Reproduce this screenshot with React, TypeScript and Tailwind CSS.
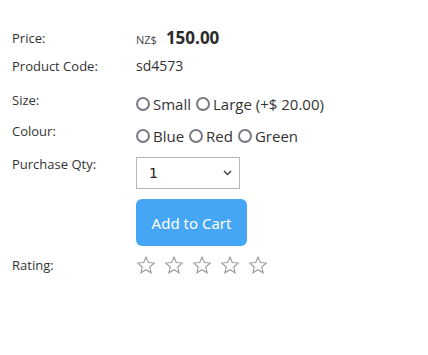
import React from 'react';

const Radio = ({ label }: { label: string }) => (
  <label className="inline-flex items-center mr-[5px]">
    <span className="w-[14px] h-[14px] rounded-full border-2 border-[#7a7a85] bg-white mr-[3px]" />
    <span>{label}</span>
  </label>
);

const Star = () => (
  <svg width="20" height="20" viewBox="0 0 24 24" className="mr-[8px]">
    <path
      d="M12 2.5l2.8 6.6 7.1.6-5.4 4.7 1.6 7-6.1-3.7-6.1 3.7 1.6-7-5.4-4.7 7.1-.6z"
      fill="none"
      stroke="#9a9a9a"
      strokeWidth="1.3"
    />
  </svg>
);

export default function App() {
  return (
    <div className="w-[428px] h-[355px] bg-white pl-[12px] pt-[28px] text-[#333] font-['Open_Sans',sans-serif] text-[13px] leading-[20px]">
      {/* Price */}
      <div className="flex h-[20px]">
        <div className="w-[124px]">Price:</div>
        <div className="flex items-baseline">
          <span className="text-[11px] text-[#444] mr-[9px]">NZ$</span>
          <span className="text-[17px] font-bold text-[#2b2b2b]">150.00</span>
        </div>
      </div>

      {/* Code */}
      <div className="flex mt-[8px] h-[20px]">
        <div className="w-[124px]">Product Code:</div>
        <div className="text-[14px]">sd4573</div>
      </div>

      {/* Size */}
      <div className="flex mt-[14px]">
        <div className="w-[124px]">Size:</div>
        <div className="flex items-center mt-[4px] text-[15px] h-[20px]">
          <Radio label="Small" />
          <Radio label="Large (+$ 20.00)" />
        </div>
      </div>

      {/* Colour */}
      <div className="flex mt-[7px]">
        <div className="w-[124px]">Colour:</div>
        <div className="flex items-center mt-[5px] text-[15px] h-[20px]">
          <Radio label="Blue" />
          <Radio label="Red" />
          <Radio label="Green" />
        </div>
      </div>

      {/* Qty */}
      <div className="flex mt-[8px]">
        <div className="w-[124px]">Purchase Qty:</div>
        <div className="flex flex-col mt-[3px]">
          <div className="w-[104px] h-[32px] border border-[#b5b5b5] flex items-center justify-between pl-[12px] pr-[7px] text-[14px] font-['DejaVu_Sans',sans-serif] text-[#222]">
            <span>1</span>
            <svg width="9" height="6" viewBox="0 0 9 6">
              <path d="M1 1l3.5 3.5L8 1" fill="none" stroke="#444" strokeWidth="1.5" />
            </svg>
          </div>
          <button className="mt-[10px] w-[111px] h-[47px] rounded-[6px] bg-[#45a6f5] text-white text-[15px] font-['Noto_Sans',sans-serif]">
            Add to Cart
          </button>
        </div>
      </div>

      {/* Rating */}
      <div className="flex mt-[9px]">
        <div className="w-[124px]">Rating:</div>
        <div className="flex items-center h-[20px]">
          <Star />
          <Star />
          <Star />
          <Star />
          <Star />
        </div>
      </div>
    </div>
  );
}
